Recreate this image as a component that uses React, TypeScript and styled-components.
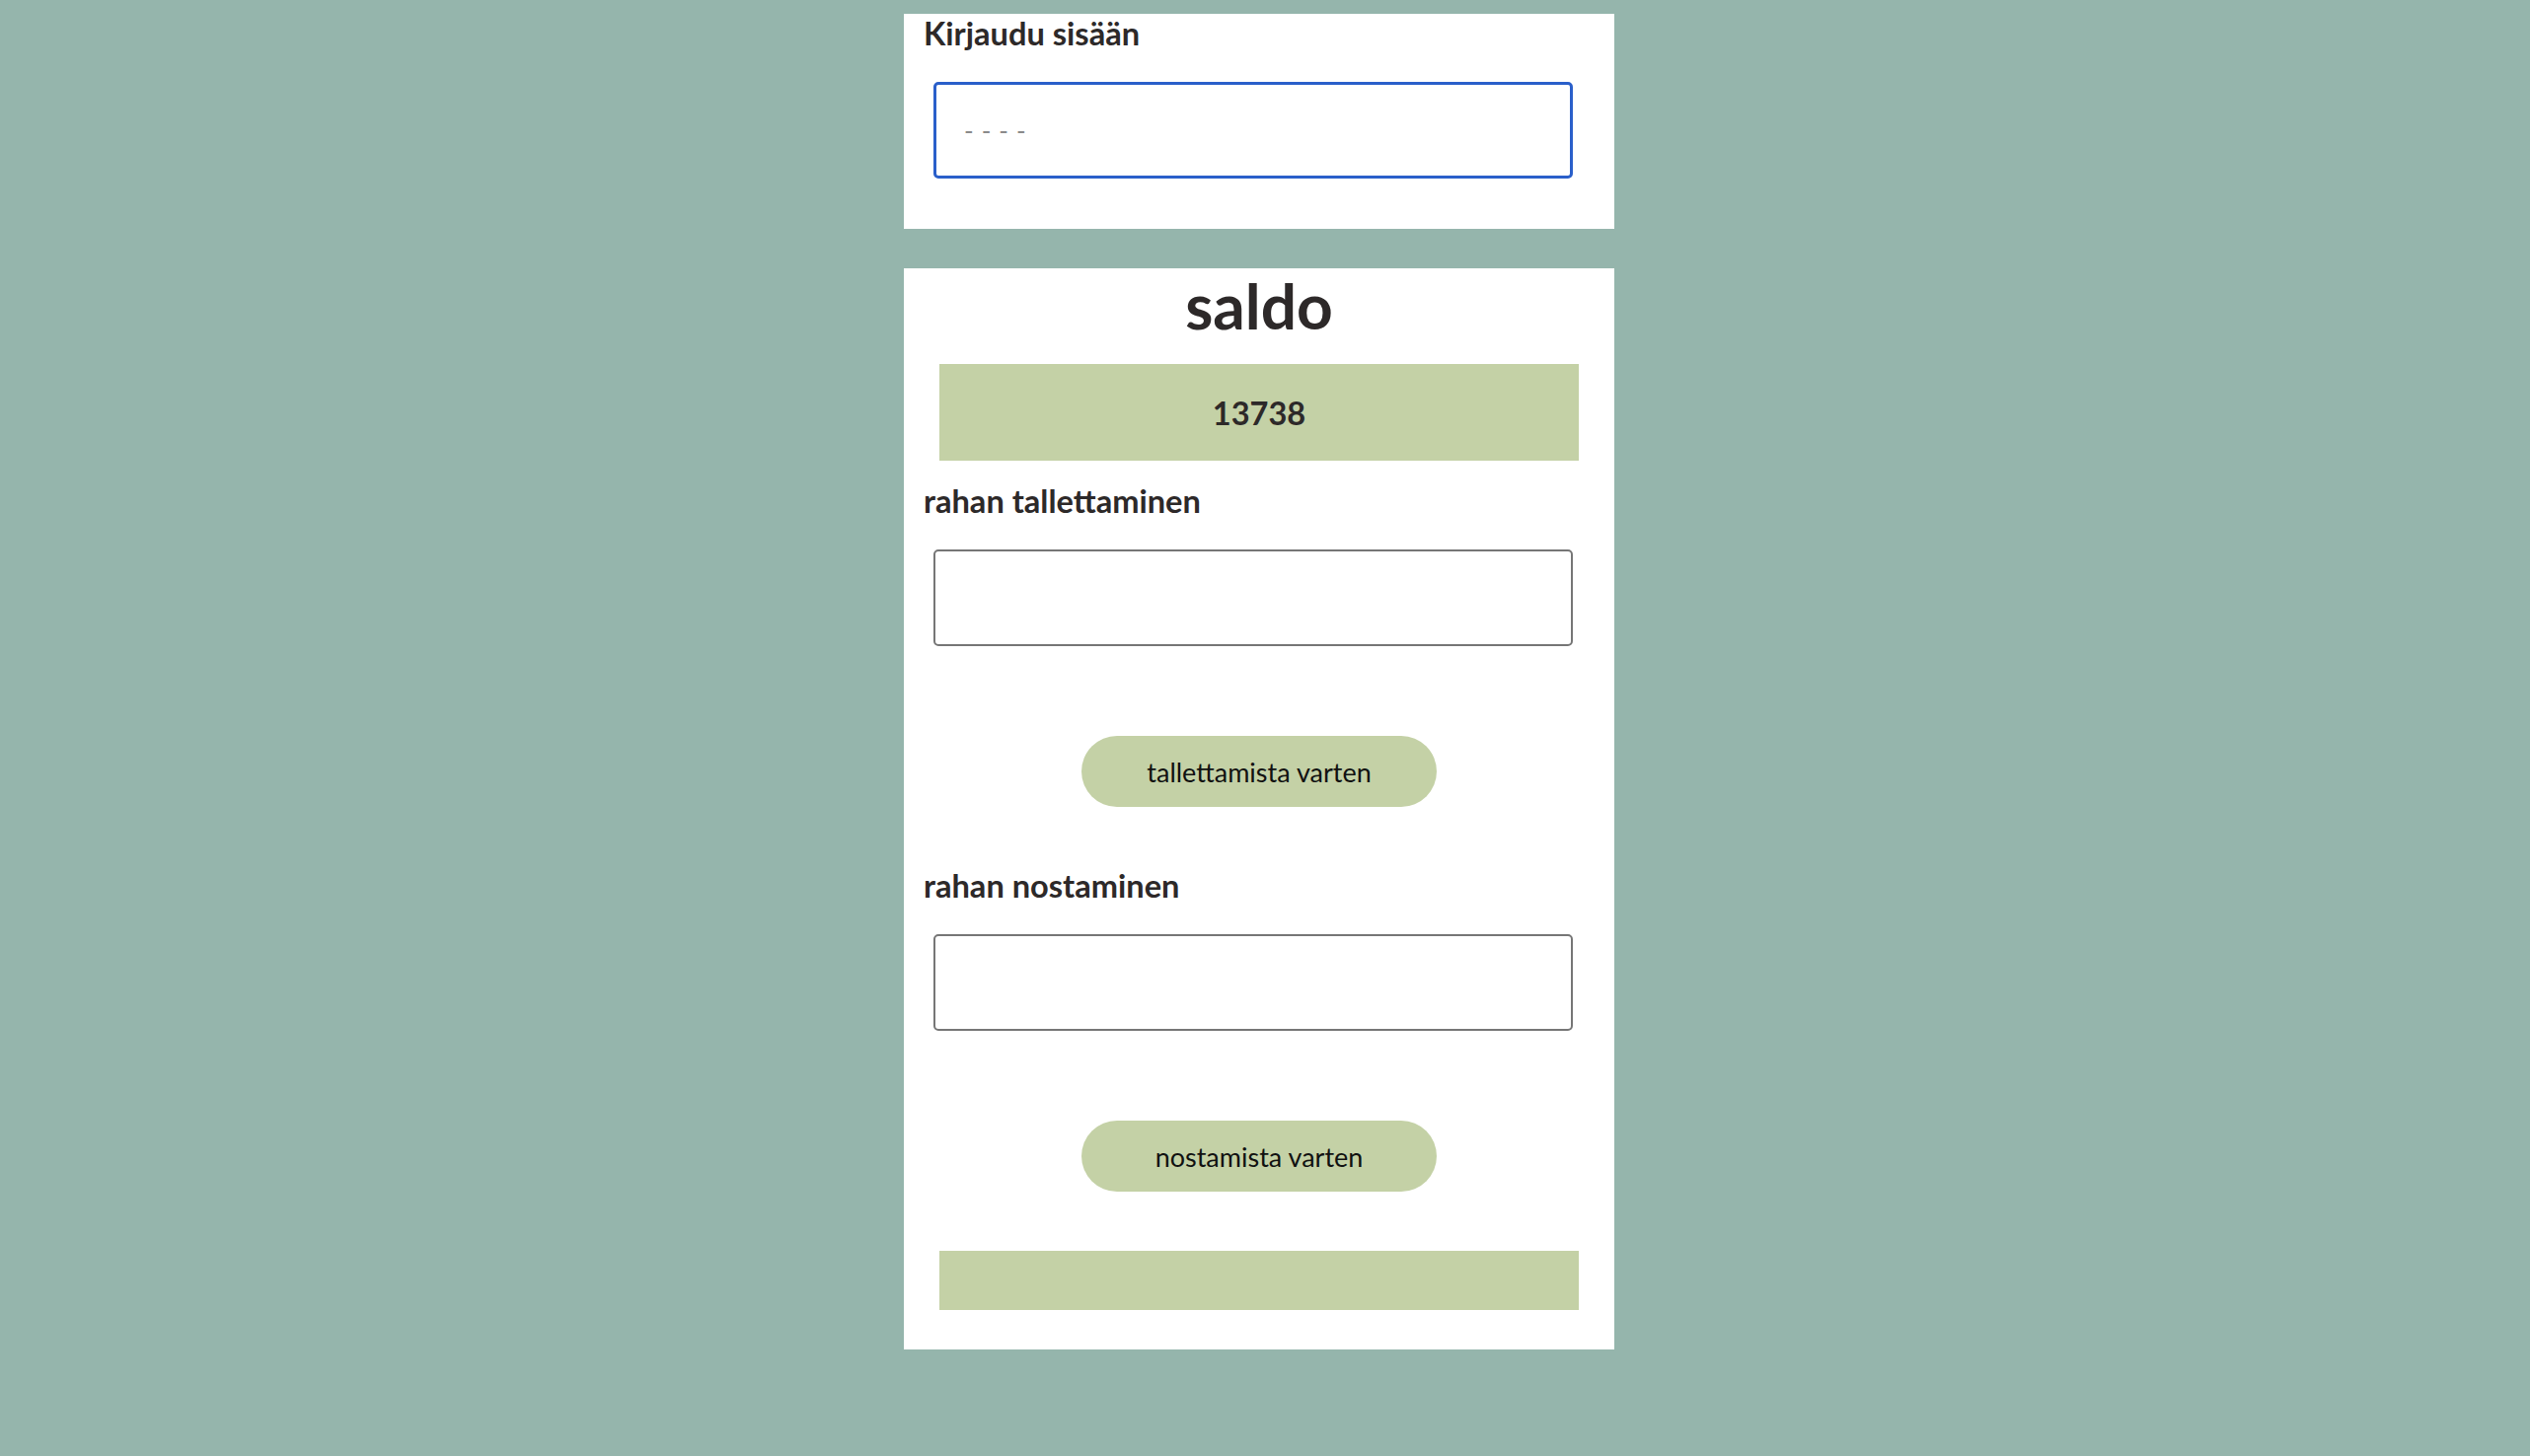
import { useState } from 'react';
import styled, { createGlobalStyle } from 'styled-components';

const GlobalStyle = createGlobalStyle`
  body {
    margin: 0;
    background-color: #95b5ac;
    font-family: Lato, 'Open Sans', sans-serif;
    color: #2d2929;
  }
  * {
    box-sizing: border-box;
  }
`;

const Page = styled.main`
  display: flex;
  flex-direction: column;
  align-items: center;
  gap: 40px;
  padding: 14px 12px 40px 0;
`;

const Card = styled.section`
  width: 720px;
  background-color: #ffffff;
  padding: 0 20px 40px;
  display: flex;
  flex-direction: column;
`;

const LoginCard = styled(Card)`
  padding-bottom: 51px;
`;

const Heading = styled.h2`
  margin: 0;
  font-size: 32.6px;
  font-weight: 700;
  line-height: 39px;
`;

const Title = styled.h1`
  margin: -1px 0 0;
  font-size: 64px;
  font-weight: 700;
  line-height: 77px;
  text-align: center;
`;

const Field = styled.input<{ focused?: boolean }>`
  display: block;
  width: 648px;
  height: 98px;
  margin: 30px 0 0 10px;
  padding: 0 28px;
  border: ${({ focused }) => (focused ? '3px solid #2a5fca' : '2px solid #767676')};
  border-radius: 5px;
  font: 400 26px Lato, sans-serif;
  color: #2d2929;
  background: #ffffff;
  outline: none;

  &::placeholder {
    color: #8a8a8a;
    letter-spacing: 8px;
  }
`;

const Balance = styled.div<{ empty?: boolean }>`
  width: 648px;
  height: ${({ empty }) => (empty ? '60px' : '98px')};
  margin: ${({ empty }) => (empty ? '60px' : '21px')} auto 0;
  background-color: #c4d1a6;
  display: flex;
  align-items: center;
  justify-content: center;
  font-size: 32.6px;
  font-weight: 700;
`;

const SectionHeading = styled(Heading)<{ gap: number }>`
  margin-top: ${({ gap }) => gap}px;
`;

const Action = styled.button`
  align-self: center;
  width: 360px;
  height: 72px;
  margin-top: 91px;
  border: none;
  border-radius: 36px;
  background-color: #c4d1a6;
  color: #111111;
  font: 400 27px Lato, sans-serif;
  cursor: pointer;
`;

function App() {
  const [saldo, setSaldo] = useState(13738);
  const [deposit, setDeposit] = useState('');
  const [withdraw, setWithdraw] = useState('');
  const [pin, setPin] = useState('');

  const talleta = () => {
    const n = Number(deposit);
    if (n > 0) setSaldo(saldo + n);
    setDeposit('');
  };

  const nosta = () => {
    const n = Number(withdraw);
    if (n > 0 && n <= saldo) setSaldo(saldo - n);
    setWithdraw('');
  };

  return (
    <>
      <GlobalStyle />
      <Page>
        <LoginCard>
          <Heading>Kirjaudu sisään</Heading>
          <Field
            focused
            type="password"
            placeholder="----"
            value={pin}
            onChange={(e) => setPin(e.target.value)}
          />
        </LoginCard>
        <Card>
          <Title>saldo</Title>
          <Balance>{saldo}</Balance>
          <SectionHeading gap={21}>rahan tallettaminen</SectionHeading>
          <Field value={deposit} onChange={(e) => setDeposit(e.target.value)} />
          <Action onClick={talleta}>tallettamista varten</Action>
          <SectionHeading gap={60}>rahan nostaminen</SectionHeading>
          <Field value={withdraw} onChange={(e) => setWithdraw(e.target.value)} />
          <Action onClick={nosta}>nostamista varten</Action>
          <Balance empty />
        </Card>
      </Page>
    </>
  );
}

export default App;
